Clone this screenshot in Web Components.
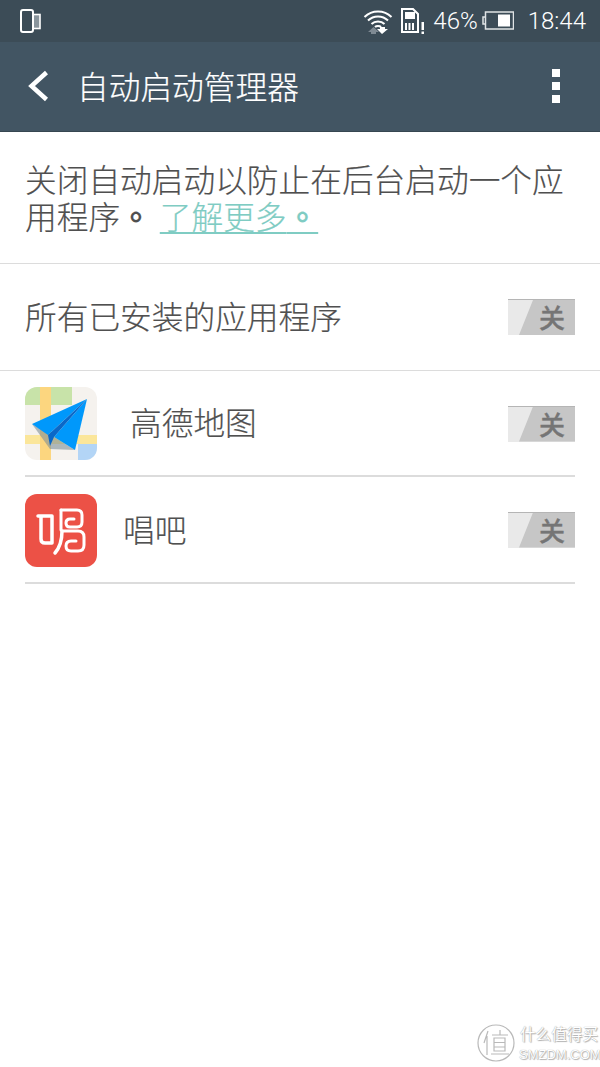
<!DOCTYPE html>
<html lang="zh-CN">
<head>
<meta charset="utf-8">
<style>
  html, body { margin: 0; padding: 0; background: #fff; }
  body { width: 600px; height: 1067px; overflow: hidden; position: relative; font-family: "Noto Sans CJK SC", "Noto Sans", sans-serif; }
</style>
</head>
<body>
<status-bar></status-bar>
<app-bar title="自动启动管理器"></app-bar>
<intro-text></intro-text>
<toggle-row label="所有已安装的应用程序" variant="all"></toggle-row>
<toggle-row label="高德地图" variant="app" gap="33" height="106" top="1"><amap-icon slot="icon"></amap-icon></toggle-row>
<toggle-row label="唱吧" variant="app" gap="26" height="107" top="2"><changba-icon slot="icon"></changba-icon></toggle-row>
<smzdm-mark></smzdm-mark>

<script>
  // small helper, every element just sets its own shadow html
  class Base extends HTMLElement {
    connectedCallback() {
      if (this.shadowRoot) return;
      this.attachShadow({ mode: 'open' }).innerHTML = this.render();
    }
  }

  class StatusBar extends Base {
    render() {
      return `
        <style>
          :host { display: flex; align-items: center; height: 42px; background: #3c4c57; color: #fff; padding: 0 14px 0 20px; font: 300 24px Roboto, sans-serif; box-sizing: border-box; }
          svg { display: block; flex: none; }
          .spacer { flex: 1; }
          .pct { margin-left: 8px; }
          .time { margin-left: 14px; }
          .batt { margin-left: 4px; }
          .sim { margin-left: 8px; }
        </style>
        <svg width="21" height="24" viewBox="0 0 21 24" fill="none" stroke="#fff">
          <rect x="9" y="5.5" width="11" height="14" fill="#8a959d" stroke-width="1.6"/>
          <rect x="1" y="1" width="12" height="22" rx="2" fill="#3c4c57" stroke-width="2"/>
        </svg>
        <span class="spacer"></span>
        <svg width="30" height="26" viewBox="0 0 30 26" fill="none" stroke="#fff" stroke-width="2">
          <path d="M1.500 9 C9 1.500 21 1.500 28.500 9"/>
          <path d="M5 12.500 C10.500 7 19.500 7 25 12.500"/>
          <path d="M8.500 16 C12 12.500 18 12.500 21.500 16"/>
          <path d="M12 19 C13.500 17.500 16.500 17.500 18 19"/>
          <path d="M10.500 19 L5 24 h3 v2 h5 v-2 h3 z" fill="#7f8a93" stroke="none"/>
          <path d="M19 26 l-5 -5 h3 v-2 h5 v2 h3 z" fill="#fff" stroke="none"/>
        </svg>
        <svg class="sim" width="24" height="26" viewBox="0 0 24 26">
          <path d="M1 1 H12 L17 6 V24 H1 Z" fill="none" stroke="#fff" stroke-width="2"/>
          <rect x="4" y="4" width="10" height="7" fill="#fff"/>
          <path d="M5 15 v7 M8.500 15 v7 M12 15 v7" stroke="#fff" stroke-width="2"/>
          <rect x="20.500" y="14" width="2.500" height="8" fill="#fff"/>
          <rect x="20.500" y="23.500" width="2.500" height="2.500" fill="#fff"/>
        </svg>
        <span class="pct">46%</span>
        <svg class="batt" width="32" height="20" viewBox="0 0 32 20" fill="none">
          <rect x="3.500" y="1" width="28" height="17" fill="none" stroke="#dfe3e5" stroke-width="1.500"/>
          <path d="M3.500 6 H1 V13 H3.500" stroke="#dfe3e5" stroke-width="1.500"/>
          <rect x="16" y="3.500" width="12" height="12" fill="#fff"/>
        </svg>
        <span class="time">18:44</span>`;
    }
  }

  class AppBar extends Base {
    render() {
      return `
        <style>
          :host { display: flex; align-items: center; height: 90px; box-sizing: border-box; background: #425563; border-bottom: 1px solid #364651; color: #fff; padding: 0 40px 2px 28px; }
          h1 { margin: 0 0 0 28px; font: 300 31.7px/1 "Noto Sans CJK SC", sans-serif; flex: 1; -webkit-text-stroke: .2px #fff; }
          svg { display: block; flex: none; }
          .dots { display: grid; gap: 5px; }
          .dots i { display: block; width: 8px; height: 8px; background: #fff; }
        </style>
        <svg width="21" height="32" viewBox="0 0 21 32" fill="none" stroke="#fff" stroke-width="4.500"><path d="M18.500 2.500 L3.500 16 L18.500 29.500"/></svg>
        <h1>${this.getAttribute('title')}</h1>
        <div class="dots"><i></i><i></i><i></i></div>`;
    }
  }

  class IntroText extends Base {
    render() {
      return `
        <style>
          :host { display: block; box-sizing: border-box; height: 132px; padding: 28px 25px 0; border-bottom: 1px solid #dcdcdc; color: #4f4f4f; font: 300 31.7px/37px "Noto Sans CJK SC", sans-serif; -webkit-text-stroke: .2px currentColor; }
          p { margin: 0; }
          a { color: #7fccc3; text-decoration: underline; text-underline-offset: 3px; text-decoration-thickness: 2px; margin-left: 1px; }
          .dot { font-family: "Noto Sans CJK TC", sans-serif; font-weight: 700; }
        </style>
        <p>关闭自动启动以防止在后台启动一个应用程序<span class="dot" lang="zh-TW">。</span> <a>了解更多<span class="dot" lang="zh-TW">。</span></a></p>`;
    }
  }

  class OffToggle extends Base {
    render() {
      return `
        <style>
          :host { display: block; position: relative; width: 67px; height: 36px; flex: none; box-sizing: border-box; background: #e9e9e9; border-top: 1px solid #b5b5b5; overflow: hidden; }
          .fill { position: absolute; inset: 0; background: #c6c6c6; clip-path: polygon(25px 0, 100% 0, 100% 100%, 11px 100%); }
          span { position: absolute; left: 30px; top: 0; width: 28px; text-align: center; color: #757575; font: 500 26px/33px "Noto Sans CJK SC", sans-serif; -webkit-text-stroke: .3px #757575; }
        </style>
        <div class="fill"></div><span>关</span>`;
    }
  }

  class ToggleRow extends Base {
    render() {
      const all = this.getAttribute('variant') === 'all';
      const gap = this.getAttribute('gap') || 0;
      const h = this.getAttribute('height') || 106;
      const top = this.getAttribute('top') || 0;
      const lift = Math.max(0, (top - 1) * 2);
      return `
        <style>
          :host { display: block; }
          .row { display: flex; align-items: center; color: #505050; font: 300 31.7px/1 "Noto Sans CJK SC", sans-serif; box-sizing: border-box; -webkit-text-stroke: .2px #505050; }
          .row.all { height: 107px; padding: 0 25px; border-bottom: 1px solid #dcdcdc; }
          .row.app { height: ${h}px; margin: 0 25px; padding-top: ${top}px; border-bottom: 2px solid #dcdcdc; }
          .label { flex: 1; padding-bottom: 3px; }
          slot { display: block; }
          off-toggle { margin-bottom: ${lift}px; }
        </style>
        <div class="row ${all ? 'all' : 'app'}">
          <slot name="icon"></slot>
          <span class="label" style="margin-left:${gap}px">${this.getAttribute('label')}</span>
          <off-toggle></off-toggle>
        </div>`;
    }
  }

  class AmapIcon extends Base {
    render() {
      return `
        <style>:host { display: block; width: 72px; height: 73px; } svg { display: block; }</style>
        <svg width="72" height="73" viewBox="0 0 72 73">
          <defs><clipPath id="r"><rect width="72" height="73" rx="12"/></clipPath></defs>
          <g clip-path="url(#r)">
            <rect width="72" height="73" fill="#f5f2ee"/>
            <rect x="0" y="0" width="15" height="18" fill="#c8e3a9"/>
            <rect x="26" y="0" width="21" height="18" fill="#c8e3a9"/>
            <rect x="0" y="48" width="72" height="9" fill="#fbe69a"/>
            <rect x="15" y="0" width="11" height="73" fill="#fcd67f"/>
            <rect x="53" y="57" width="19" height="16" fill="#b3d5f6"/>
            <path d="M7 37 L25 62 L50 63 L29 50 Z" fill="#7f8f98" opacity=".6"/>
            <path d="M7 37 L62 12 L23 48 Z" fill="#0098fb"/>
            <path d="M29 50 L62 12 L50 63 Z" fill="#0098fb"/>
            <path d="M23 48 L62 12 L29 50 L25 59 Z" fill="#0a68c8"/>
          </g>
        </svg>`;
    }
  }

  class ChangbaIcon extends Base {
    render() {
      return `
        <style>:host { display: block; width: 72px; height: 73px; } svg { display: block; }</style>
        <svg width="72" height="73" viewBox="0 0 72 73">
          <rect width="72" height="73" rx="12" fill="#ec5146"/>
          <g fill="none" stroke="#fff" stroke-width="3" stroke-linecap="round" stroke-linejoin="round">
            <path d="M13 22 H27 V49 H20 Q16 49 16 45 V22" stroke-width="3.500"/>
            <path d="M36 16 H52 Q57 16 57 21 V28 Q57 33 52 33 H45 Q41 33 41 29 Q41 25 45 25 H49"/>
            <path d="M36 16 V36"/>
            <path d="M38 37 H53 Q59 37 59 43 V51 Q59 57 53 57 H46 Q41 57 41 52 Q41 47 46 47 H51"/>
            <path d="M37 37 Q37 51 30 59" stroke-width="3.500"/>
          </g>
        </svg>`;
    }
  }

  class SmzdmMark extends Base {
    render() {
      return `
        <style>
          :host { display: block; position: absolute; left: 476px; top: 1022px; width: 124px; height: 45px; color: #fff; text-shadow: 0 0 1px #8d8d8d, 1px 1px 1px #b5b5b5; overflow: hidden; }
          svg { position: absolute; left: 0; top: 1px; }
          .cn { position: absolute; left: 44px; top: 1px; font: 400 15.6px/20px "Noto Sans CJK SC", sans-serif; white-space: nowrap; }
          .en { position: absolute; left: 43px; top: 24px; font: 400 13px/18px "Liberation Sans", sans-serif; white-space: nowrap; }
        </style>
        <svg width="40" height="42" viewBox="0 0 40 42" fill="none" stroke="#b9b9b9" stroke-width="1.200">
          <circle cx="20" cy="20" r="18"/>
          <path d="M12 8 L8 20 M11 13 V32 M16 12 H32 M24 7 V12 M18 15 H29 V28 H18 Z M18 19.500 H29 M18 24 H29 M15 31 H33"/>
        </svg>
        <span class="cn">什么值得买</span>
        <span class="en">SMZDM.COM</span>`;
    }
  }

  customElements.define('status-bar', StatusBar);
  customElements.define('app-bar', AppBar);
  customElements.define('intro-text', IntroText);
  customElements.define('off-toggle', OffToggle);
  customElements.define('toggle-row', ToggleRow);
  customElements.define('amap-icon', AmapIcon);
  customElements.define('changba-icon', ChangbaIcon);
  customElements.define('smzdm-mark', SmzdmMark);
</script>
</body>
</html>
